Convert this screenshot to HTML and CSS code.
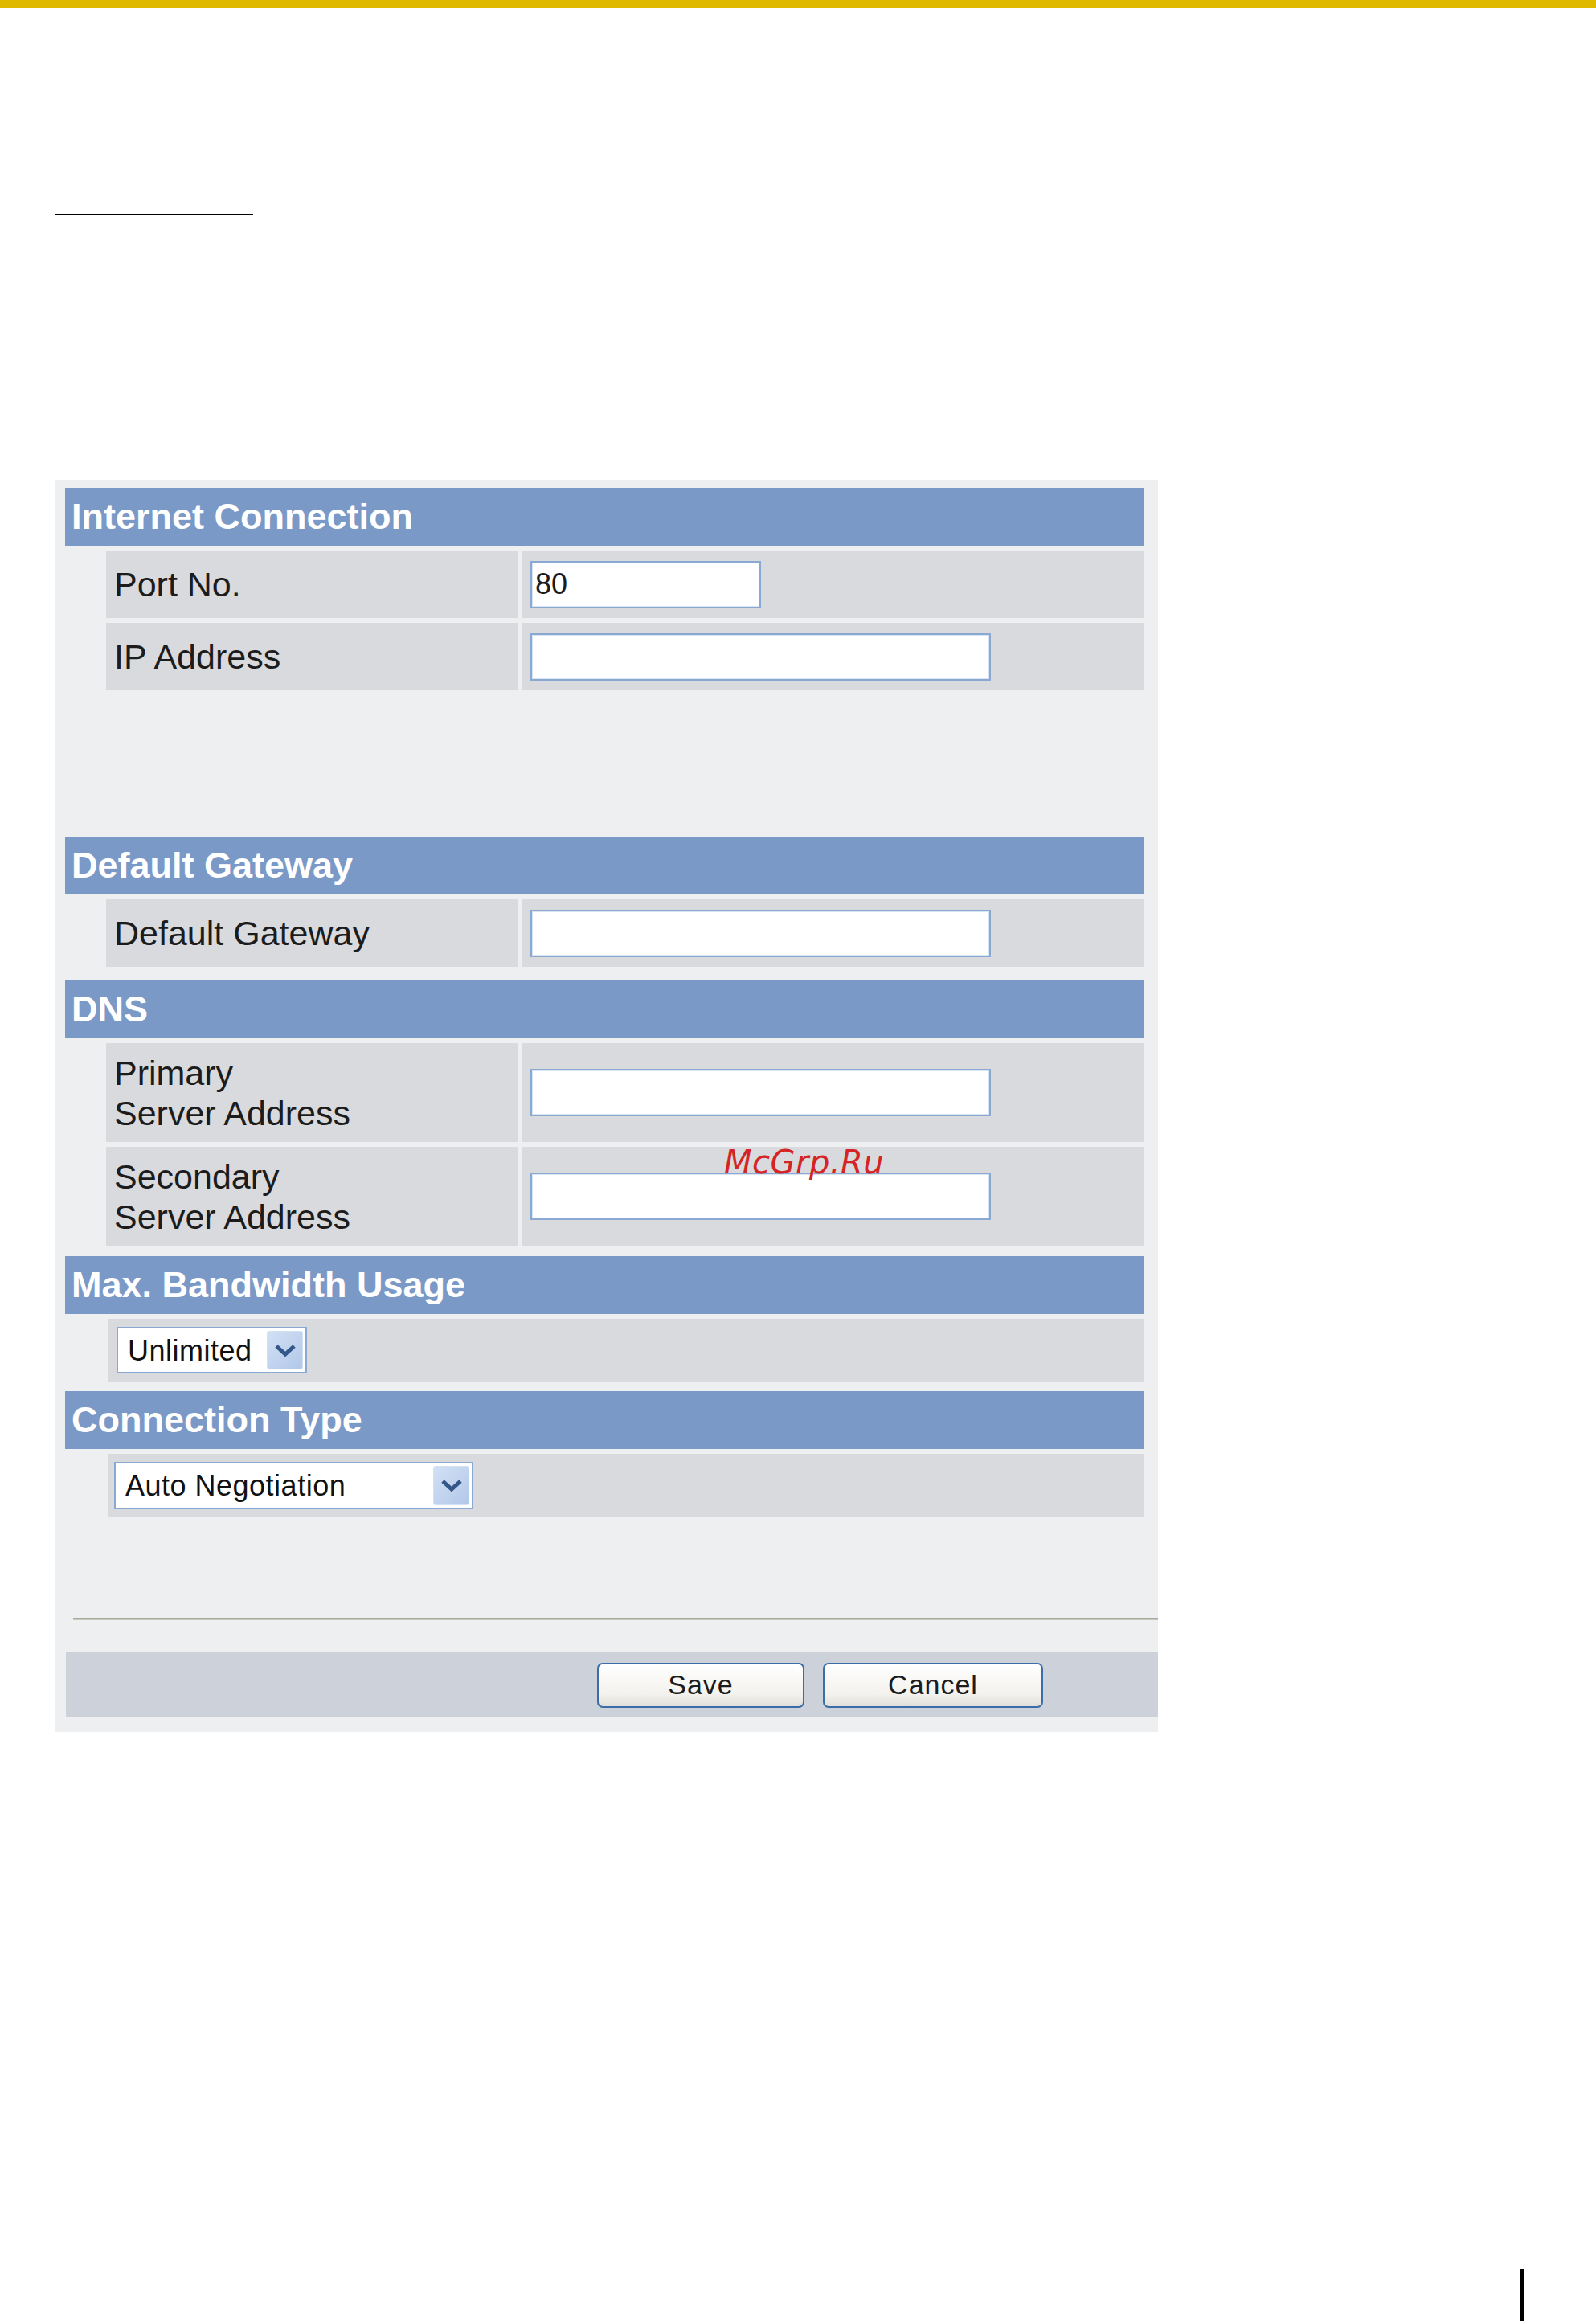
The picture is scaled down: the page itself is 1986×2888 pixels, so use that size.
FILE: index.html
```html
<!DOCTYPE html>
<html lang="en">
<head>
  <meta charset="UTF-8">
  <meta name="viewport" content="width=device-width, initial-scale=1.0">
  <title>Network Settings</title>
  <link rel="stylesheet" href="styles.css">
</head>
<body>
  <div class="top-bar"></div>
  <div class="title-rule"></div>

  <form class="panel">
    <div class="section section-internet">
      <div class="section-head">Internet Connection</div>
      <div class="row">
        <div class="label">Port No.</div>
        <div class="value"><input class="field field-short" type="text" value="80"></div>
      </div>
      <div class="row">
        <div class="label">IP Address</div>
        <div class="value"><input class="field" type="text"></div>
      </div>
    </div>

    <div class="section section-gateway">
      <div class="section-head">Default Gateway</div>
      <div class="row">
        <div class="label">Default Gateway</div>
        <div class="value"><input class="field" type="text"></div>
      </div>
    </div>

    <div class="section section-dns">
      <div class="section-head">DNS</div>
      <div class="row row-tall">
        <div class="label">Primary<br>Server Address</div>
        <div class="value"><input class="field" type="text"></div>
      </div>
      <div class="row row-tall">
        <div class="label">Secondary<br>Server Address</div>
        <div class="value"><input class="field" type="text"></div>
      </div>
    </div>

    <div class="section">
      <div class="section-head">Max. Bandwidth Usage</div>
      <div class="row row-select">
        <div class="select select-bandwidth">
          <select>
            <option>Unlimited</option>
          </select>
          <span class="select-arrow">
            <svg width="28" height="16" viewBox="0 0 28 16"><polyline points="3,3 14,13 25,3" fill="none" stroke="#33578a" stroke-width="5"/></svg>
          </span>
        </div>
      </div>
    </div>

    <div class="section section-last">
      <div class="section-head">Connection Type</div>
      <div class="row row-select row-select-alt">
        <div class="select select-type">
          <select>
            <option>Auto Negotiation</option>
          </select>
          <span class="select-arrow">
            <svg width="28" height="16" viewBox="0 0 28 16"><polyline points="3,3 14,13 25,3" fill="none" stroke="#33578a" stroke-width="5"/></svg>
          </span>
        </div>
      </div>
    </div>

    <div class="divider"></div>

    <div class="actions">
      <button type="button" class="btn btn-save">Save</button>
      <button type="button" class="btn btn-cancel">Cancel</button>
    </div>
  </form>

  <div class="watermark">McGrp.Ru</div>

  <div class="page-mark"></div>
</body>
</html>
```

FILE: styles.css
```css
html, body {
  overflow: hidden;
}
body {
  margin: 0;
  background: #ffffff;
  font-family: "Liberation Sans", Arial, sans-serif;
  color: #1c1c1c;
}
.top-bar {
  height: 10px;
  background-color: #dfb800;
}
.title-rule {
  width: 246px;
  height: 2px;
  margin: 256px 0 0 69px;
  background: #000000;
}
.panel {
  width: 1372px;
  box-sizing: border-box;
  margin: 329px 0 0 69px;
  padding: 10px 18px 18px 12px;
  background: #eeeff1;
}
.section {
  margin-bottom: 12px;
}
.section-internet {
  margin-bottom: 182px;
}
.section-gateway {
  margin-bottom: 17px;
}
.section-dns {
  margin-bottom: 13px;
}
.section-last {
  margin-bottom: 126px;
}
.section-head {
  height: 72px;
  padding-left: 8px;
  display: flex;
  align-items: center;
  background: #7b99c6;
  color: #ffffff;
  font-size: 45px;
  font-weight: bold;
}
.row {
  height: 84px;
  margin: 6px 0 0 51px;
  display: grid;
  grid-template-columns: 512px 1fr;
  gap: 6px;
}
.row-tall {
  height: 123px;
}
.label,
.value {
  background: #d9dadd;
  padding-left: 10px;
  display: flex;
  align-items: center;
}
.label {
  font-size: 43px;
  line-height: 50px;
}
.field {
  width: 573px;
  height: 59px;
  box-sizing: border-box;
  padding: 0 4px;
  border: 2px solid #89a9d3;
  box-shadow: inset 0 0 0 1px #dbe5f2;
  background: #ffffff;
  font-family: "Liberation Sans", Arial, sans-serif;
  font-size: 36px;
  color: #1c1c1c;
  outline: none;
}
.field-short {
  width: 287px;
}
.row-select {
  height: 78px;
  margin-left: 54px;
  display: flex;
  align-items: center;
  padding-left: 10px;
  background: #d9dadd;
}
.row-select-alt {
  margin-left: 53px;
  padding-left: 8px;
}
.select {
  height: 58px;
  box-sizing: border-box;
  padding: 3px;
  border: 2px solid #89a9d3;
  background: #ffffff;
  display: flex;
  align-items: stretch;
}
.select-bandwidth {
  width: 237px;
}
.select-type {
  width: 447px;
  height: 59px;
}
.select select {
  flex: 1;
  min-width: 0;
  appearance: none;
  -webkit-appearance: none;
  border: none;
  background: transparent;
  padding: 0 0 0 9px;
  font-family: "Liberation Sans", Arial, sans-serif;
  font-size: 36px;
  letter-spacing: 0.5px;
  color: #111111;
  outline: none;
}
.select-arrow {
  width: 45px;
  box-sizing: border-box;
  border: 1px solid #d3e0f3;
  border-radius: 3px;
  background: linear-gradient(135deg, #d2e0f4, #b2c8e9);
  display: flex;
  align-items: center;
  justify-content: center;
}
.divider {
  height: 3px;
  margin: 0 -18px 40px 10px;
  background: linear-gradient(#9ea294, #cfd0c2);
}
.actions {
  height: 81px;
  margin: 0 -18px 0 1px;
  padding-left: 661px;
  display: flex;
  align-items: center;
  gap: 23px;
  background: #cdd1d9;
}
.btn {
  height: 56px;
  box-sizing: border-box;
  border: 2px solid #3b6ea8;
  border-radius: 7px;
  background: linear-gradient(#ffffff, #f3f2ee 70%, #e2e0d8);
  font-family: "Liberation Sans", Arial, sans-serif;
  font-size: 34px;
  letter-spacing: 1px;
  color: #1c1c1c;
  cursor: pointer;
}
.btn-save {
  width: 258px;
}
.btn-cancel {
  width: 274px;
}
.watermark {
  position: absolute;
  left: 901px;
  top: 1426px;
  font-family: "DejaVu Sans", sans-serif;
  font-style: italic;
  font-size: 40px;
  line-height: 1;
  letter-spacing: 0.5px;
  color: #d42424;
}
.page-mark {
  width: 4px;
  height: 65px;
  margin: 668px 0 0 1892px;
  background: #000000;
}
```
